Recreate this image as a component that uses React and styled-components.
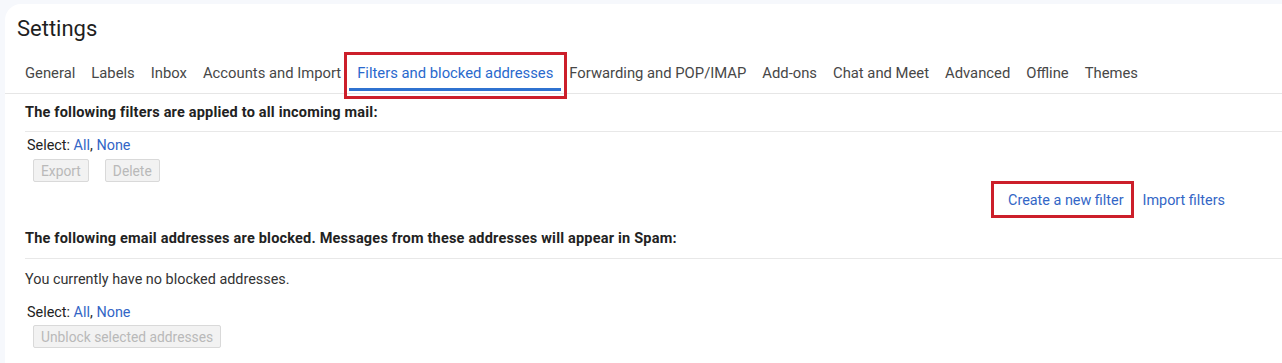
import styled, { createGlobalStyle } from "styled-components";

const GlobalStyle = createGlobalStyle`
  html, body {
    margin: 0;
    padding: 0;
    background: #f6f8fc;
    font-family: Roboto, "Noto Sans", Arial, sans-serif;
    color: #1f1f1f;
  }
`;

const Page = styled.div`
  padding: 4px 0 0 5px;
  height: 359px;
  overflow: hidden;
`;

const Panel = styled.main`
  background: #ffffff;
  border-top-left-radius: 16px;
  height: 100%;
`;

const Title = styled.h1`
  margin: 0;
  padding: 10px 0 0 12px;
  height: 38px;
  font-size: 22px;
  font-weight: 400;
  line-height: 30px;
  color: #1f1f1f;
`;

const TabBar = styled.nav`
  display: flex;
  padding: 0 0 0 12px;
  height: 41px;
  border-bottom: 1px solid #e6e6e6;
  align-items: stretch;
`;

const Tab = styled.div`
  position: relative;
  display: flex;
  align-items: center;
  padding: 0 8px;
  font-size: 14.8px;
  white-space: nowrap;
  color: ${(p) => (p.$active ? "#2a69cd" : "#474747")};

  ${(p) =>
    p.$active &&
    `
    &::before {
      content: "";
      position: absolute;
      left: 0;
      right: 0;
      bottom: 2px;
      height: 3px;
      background: #2f72d0;
    }
  `}

  ${(p) =>
    p.$marked &&
    `
    &::after {
      content: "";
      position: absolute;
      left: -5px;
      right: -6px;
      top: 0;
      bottom: -6px;
      border: 3px solid #cc1f2a;
    }
  `}
`;

const Content = styled.section`
  padding: 0 0 0 20px;
`;

const Heading = styled.div`
  display: flex;
  align-items: center;
  height: ${(p) => p.$height || 38}px;
  padding-bottom: 1px;
  font-size: 14.5px;
  letter-spacing: 0.2px;
  font-weight: 700;
  color: #222;
  border-bottom: 1px solid #e8e8e8;
  box-sizing: border-box;
  margin-top: ${(p) => p.$top || 0}px;
`;

const SelectRow = styled.div`
  padding-left: 2px;
  font-size: 14.4px;
  line-height: 18px;
  color: #222;
  margin-top: ${(p) => p.$top || 0}px;
`;

const Link = styled.a`
  color: #3366c6;
  text-decoration: none;
  cursor: pointer;
`;

const ButtonRow = styled.div`
  display: flex;
  gap: 16px;
  padding-left: 8px;
  margin-top: ${(p) => p.$top || 0}px;
`;

const GreyButton = styled.button`
  height: 23px;
  padding: 0 7px;
  font-family: Roboto, Arial, sans-serif;
  font-size: 13.8px;
  color: #b9b9b9;
  background: #f2f2f2;
  border: 1px solid #d9d9d9;
  border-radius: 2px;
  box-sizing: border-box;
`;

const ActionRow = styled.div`
  display: flex;
  justify-content: flex-end;
  gap: 19px;
  padding-right: 57px;
  margin-top: 5px;
  height: 26px;
  align-items: center;
`;

const ActionLink = styled(Link)`
  position: relative;
  font-size: 14.4px;

  ${(p) =>
    p.$marked &&
    `
    &::after {
      content: "";
      position: absolute;
      left: -17px;
      right: -10px;
      top: -11px;
      bottom: -9px;
      border: 3px solid #cc1f2a;
    }
  `}
`;

const Note = styled.div`
  font-size: 14.4px;
  line-height: 18px;
  color: #333;
  margin-top: 12px;
`;

const tabs = [
  "General",
  "Labels",
  "Inbox",
  "Accounts and Import",
  "Filters and blocked addresses",
  "Forwarding and POP/IMAP",
  "Add-ons",
  "Chat and Meet",
  "Advanced",
  "Offline",
  "Themes",
];

export default function App() {
  return (
    <>
      <GlobalStyle />
      <Page>
        <Panel>
          <Title>Settings</Title>
          <TabBar>
            {tabs.map((t) => (
              <Tab
                key={t}
                $active={t === "Filters and blocked addresses"}
                $marked={t === "Filters and blocked addresses"}
              >
                {t}
              </Tab>
            ))}
          </TabBar>
          <Content>
            <Heading>The following filters are applied to all incoming mail:</Heading>
            <SelectRow $top={5}>
              Select: <Link>All</Link>, <Link>None</Link>
            </SelectRow>
            <ButtonRow $top={4}>
              <GreyButton disabled>Export</GreyButton>
              <GreyButton disabled>Delete</GreyButton>
            </ButtonRow>
            <ActionRow>
              <ActionLink $marked>Create a new filter</ActionLink>
              <ActionLink>Import filters</ActionLink>
            </ActionRow>
            <Heading $top={6} $height={40}>
              The following email addresses are blocked. Messages from these addresses will appear in Spam:
            </Heading>
            <Note>You currently have no blocked addresses.</Note>
            <SelectRow $top={15}>
              Select: <Link>All</Link>, <Link>None</Link>
            </SelectRow>
            <ButtonRow $top={3}>
              <GreyButton disabled>Unblock selected addresses</GreyButton>
            </ButtonRow>
          </Content>
        </Panel>
      </Page>
    </>
  );
}
